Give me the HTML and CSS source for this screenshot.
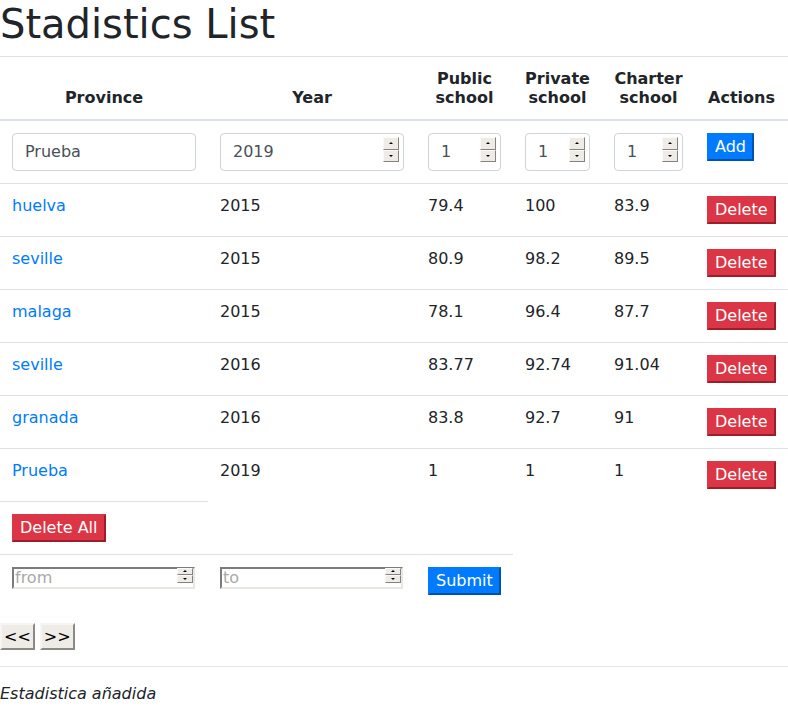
FILE: index.html
```html
<!DOCTYPE html>
<html lang="es">
<head>
<meta charset="utf-8">
<title>Stadistics List</title>
<link rel="stylesheet" href="styles.css">
</head>
<body>
<h1 class="title">Stadistics List</h1>
<table class="stats">
  <colgroup>
    <col class="c-prov"><col class="c-year"><col class="c-pub"><col class="c-priv"><col class="c-char"><col class="c-act">
  </colgroup>
  <thead>
    <tr>
      <th>Province</th>
      <th>Year</th>
      <th>Public school</th>
      <th>Private school</th>
      <th>Charter school</th>
      <th>Actions</th>
    </tr>
  </thead>
  <tbody>
    <tr>
      <td><input class="field" type="text" value="Prueba"></td>
      <td><span class="numwrap"><input class="field" type="number" value="2019"><span class="spin"><span class="spin-up"></span><span class="spin-down"></span></span></span></td>
      <td><span class="numwrap"><input class="field" type="number" value="1"><span class="spin"><span class="spin-up"></span><span class="spin-down"></span></span></span></td>
      <td><span class="numwrap"><input class="field" type="number" value="1"><span class="spin"><span class="spin-up"></span><span class="spin-down"></span></span></span></td>
      <td><span class="numwrap"><input class="field" type="number" value="1"><span class="spin"><span class="spin-up"></span><span class="spin-down"></span></span></span></td>
      <td><button class="btn btn-blue" type="button">Add</button></td>
    </tr>
    <tr>
      <td><a href="#">huelva</a></td><td>2015</td><td>79.4</td><td>100</td><td>83.9</td>
      <td><button class="btn btn-red" type="button">Delete</button></td>
    </tr>
    <tr>
      <td><a href="#">seville</a></td><td>2015</td><td>80.9</td><td>98.2</td><td>89.5</td>
      <td><button class="btn btn-red" type="button">Delete</button></td>
    </tr>
    <tr>
      <td><a href="#">malaga</a></td><td>2015</td><td>78.1</td><td>96.4</td><td>87.7</td>
      <td><button class="btn btn-red" type="button">Delete</button></td>
    </tr>
    <tr>
      <td><a href="#">seville</a></td><td>2016</td><td>83.77</td><td>92.74</td><td>91.04</td>
      <td><button class="btn btn-red" type="button">Delete</button></td>
    </tr>
    <tr>
      <td><a href="#">granada</a></td><td>2016</td><td>83.8</td><td>92.7</td><td>91</td>
      <td><button class="btn btn-red" type="button">Delete</button></td>
    </tr>
    <tr>
      <td><a href="#">Prueba</a></td><td>2019</td><td>1</td><td>1</td><td>1</td>
      <td><button class="btn btn-red" type="button">Delete</button></td>
    </tr>
    <tr>
      <td><button class="btn btn-red" type="button">Delete All</button></td>
    </tr>
    <tr>
      <td><span class="numwrap"><input class="plain" type="number" placeholder="from"><span class="spin spin-sm"><span class="spin-up"></span><span class="spin-down"></span></span></span></td>
      <td><span class="numwrap"><input class="plain" type="number" placeholder="to"><span class="spin spin-sm"><span class="spin-up"></span><span class="spin-down"></span></span></span></td>
      <td><button class="btn btn-blue" type="button">Submit</button></td>
    </tr>
  </tbody>
</table>
<div class="pager">
  <button class="pbtn" type="button">&lt;&lt;</button>
  <button class="pbtn" type="button">&gt;&gt;</button>
</div>
<hr class="sep">
<p class="msg"><em>Estadistica añadida</em></p>
</body>
</html>
```

FILE: styles.css
```css
* { box-sizing: border-box; }

body {
  margin: 0;
  font-family: "DejaVu Sans", sans-serif;
  font-size: 16px;
  color: #212529;
  background: #fff;
}

a { color: #007bff; text-decoration: none; }

.title {
  margin: 0 0 8px;
  font-size: 40px;
  font-weight: 500;
  line-height: 48px;
}

.stats {
  width: 788px;
  table-layout: fixed;
  border-collapse: collapse;
  margin-bottom: 16px;
}

.c-prov { width: 208px; }
.c-year { width: 208px; }
.c-pub { width: 97px; }
.c-priv { width: 89px; }
.c-char { width: 93px; }
.c-act { width: 93px; }

.stats th {
  padding: 12px;
  vertical-align: bottom;
  text-align: center;
  font-weight: bold;
  border-top: 1px solid #dee2e6;
  border-bottom: 2px solid #dee2e6;
  line-height: 19px;
}

.stats td {
  padding: 12px;
  vertical-align: top;
  text-align: left;
  border-top: 1px solid #dee2e6;
  line-height: 19px;
}

.numwrap {
  position: relative;
  display: block;
}

.field {
  display: block;
  width: 100%;
  height: 38px;
  padding: 5px 12px 7px;
  font-family: "DejaVu Sans", sans-serif;
  font-size: 16px;
  line-height: 24px;
  color: #495057;
  background: #fff;
  border: 1px solid #ced4da;
  border-radius: 4px;
  margin: 0;
}

input[type=number] { -moz-appearance: textfield; }
input[type=number]::-webkit-inner-spin-button,
input[type=number]::-webkit-outer-spin-button {
  -webkit-appearance: none;
  margin: 0;
}

.plain {
  display: block;
  width: 183px;
  height: 22px;
  padding: 0 1px;
  margin: 0;
  font-family: "DejaVu Sans", sans-serif;
  font-size: 16px;
  line-height: 18px;
  color: #212529;
  background: #fff;
  border: 2px solid;
  border-color: #7c7c7c #e9e7e2 #e9e7e2 #7c7c7c;
  border-radius: 0;
}
.plain::placeholder { color: #a9a9a9; }

.spin {
  position: absolute;
  right: 5px;
  top: 4px;
  width: 16px;
  height: 25px;
  display: flex;
  flex-direction: column;
}
.spin-sm {
  right: 3px;
  top: 1px;
  height: 15px;
}

.spin-up, .spin-down {
  flex: 1;
  position: relative;
  background: #efebe7;
  border: 1px solid;
  border-color: #fbfaf9 #858380 #858380 #fbfaf9;
}
.spin-up::before, .spin-down::before {
  content: "";
  position: absolute;
  left: 50%;
  top: 50%;
  margin-left: -2px;
  margin-top: -1px;
  border-left: 2px solid transparent;
  border-right: 2px solid transparent;
}
.spin-up::before { border-bottom: 2px solid #000; }
.spin-down::before { border-top: 2px solid #000; }

.btn {
  display: inline-block;
  margin: 0;
  padding: 2px 6px;
  font-family: "DejaVu Sans", sans-serif;
  font-size: 16px;
  line-height: 20px;
  color: #fff;
  border: 2px solid;
  border-radius: 0;
  vertical-align: top;
}
.btn-red {
  background: #dc3545;
  border-color: #dc3545 #9a1f2b #9a1f2b #dc3545;
}
.btn-blue {
  background: #007bff;
  border-color: #007bff #0053ad #0053ad #007bff;
}

.pager {
  display: flex;
  gap: 5px;
}
.pbtn {
  margin: 0;
  padding: 1px 2px;
  font-family: "DejaVu Sans", sans-serif;
  font-size: 16px;
  line-height: 21px;
  color: #000;
  background: #efebe7;
  border: 2px solid;
  border-color: #f7f5f2 #8d8a85 #8d8a85 #f7f5f2;
  border-radius: 0;
}

.sep {
  margin: 16px 0;
  border: 0;
  border-top: 1px solid rgba(0, 0, 0, 0.1);
  height: 0;
}

.msg {
  margin: 0;
  line-height: 22px;
}
```
